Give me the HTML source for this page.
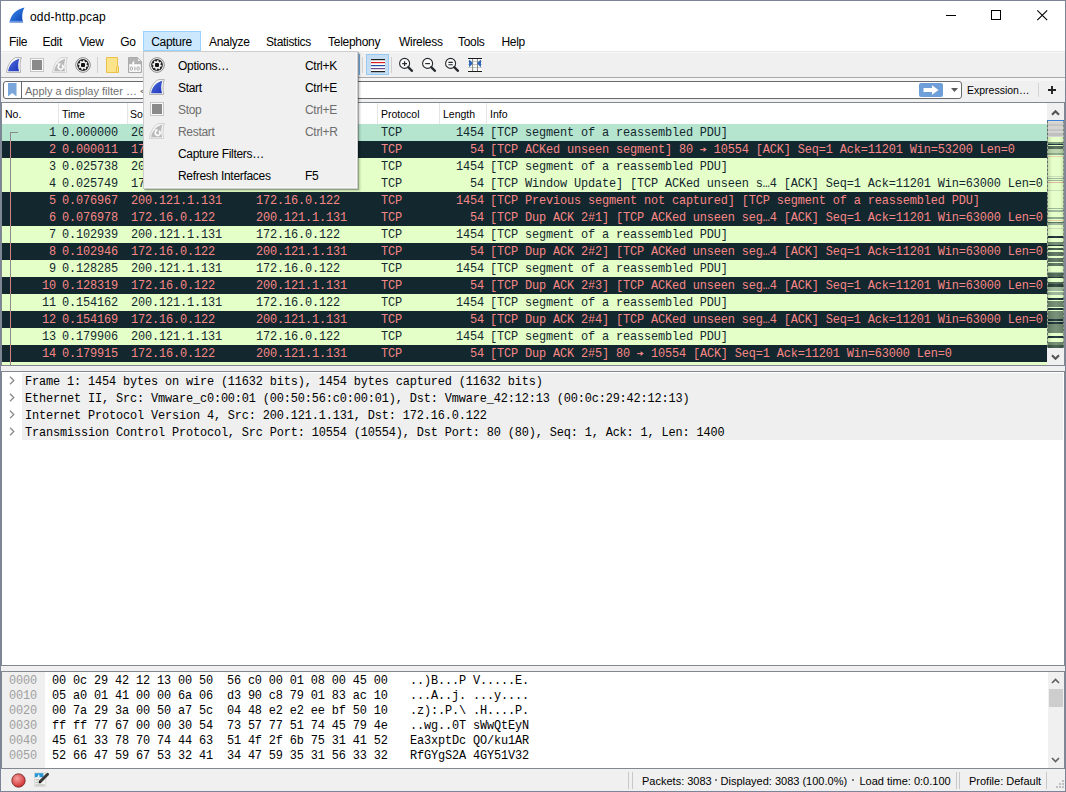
<!DOCTYPE html><html><head><meta charset="utf-8"><style>
*{margin:0;padding:0;box-sizing:border-box}
html,body{width:1066px;height:792px;overflow:hidden;background:#fff}
body{position:relative;font-family:"Liberation Sans",sans-serif;font-size:12px;color:#000}
.a{position:absolute}
.t{position:absolute;white-space:pre;line-height:1}
.ic{position:absolute;overflow:visible}
.mono{font-family:"Liberation Mono",monospace;font-size:11.9px;letter-spacing:-0.14px}
.row{position:absolute;left:2px;width:1045px;height:17px;overflow:hidden}
.row .c{position:absolute;top:1px;white-space:pre;font-family:"Liberation Mono",monospace;font-size:11.9px;letter-spacing:-0.14px;line-height:17px}
.ok{background:#e4ffc7;color:#12272e}
.bad{background:#12272e;color:#f78787}
.sel{background:#b5e5cf;color:#12272e}
.hdr{position:absolute;top:109px;font-size:10.5px;line-height:1;white-space:pre}
.vl{position:absolute;width:1px}
.hl{position:absolute;height:1px}
.mi{position:absolute;white-space:pre;font-size:12px;line-height:1}
.dis{color:#6d6d6d}
</style></head><body>
<svg width="0" height="0" style="position:absolute"><defs>
<linearGradient id="finb" x1="0" y1="0" x2="1" y2="1"><stop offset="0" stop-color="#4c6ee0"/><stop offset="1" stop-color="#1f36b8"/></linearGradient>
<linearGradient id="fint" x1="0" y1="0" x2="1" y2="1"><stop offset="0" stop-color="#3d8ef0"/><stop offset="1" stop-color="#0a3fb0"/></linearGradient>
</defs></svg>
<div class="a" style="left:0;top:0;width:1066px;height:792px;border:1px solid #7a8698;border-right-color:#7a8698"></div>
<svg class="ic" style="left:9px;top:7px" width="16" height="16" viewBox="0 0 16 16"><path d="M0.5 15.5 C2 8 6 2.5 15.5 0.5 C13 4.5 12.5 10 14 15.5 Z" fill="url(#fint)"/><rect x="0.5" y="13.8" width="13.5" height="1.7" fill="#7fa6e6" opacity="0.8"/></svg>
<div class="t" style="left:30px;top:10.5px;font-size:12px;letter-spacing:0.2px;color:#000">odd-http.pcap</div>
<div class="a" style="left:946px;top:15px;width:10px;height:1px;background:#000"></div>
<div class="a" style="left:991px;top:10px;width:10px;height:10px;border:1px solid #000"></div>
<svg class="ic" style="left:1037px;top:10px" width="11" height="11" viewBox="0 0 11 11"><path d="M0.3 0.3 L10.2 10.2 M10.2 0.3 L0.3 10.2" stroke="#000" stroke-width="1.1"/></svg>
<div class="a" style="left:143px;top:31px;width:58px;height:20px;background:#cce8ff;border:1px solid #99d1ff"></div>
<div class="mi" style="left:9.0px;top:36px;font-size:12px;letter-spacing:-0.3px">File</div>
<div class="mi" style="left:42.5px;top:36px;font-size:12px;letter-spacing:-0.3px">Edit</div>
<div class="mi" style="left:79.0px;top:36px;font-size:12px;letter-spacing:-0.3px">View</div>
<div class="mi" style="left:120.2px;top:36px;font-size:12px;letter-spacing:-0.3px">Go</div>
<div class="mi" style="left:151.2px;top:36px;font-size:12px;letter-spacing:-0.3px">Capture</div>
<div class="mi" style="left:209.0px;top:36px;font-size:12px;letter-spacing:-0.3px">Analyze</div>
<div class="mi" style="left:265.9px;top:36px;font-size:12px;letter-spacing:-0.3px">Statistics</div>
<div class="mi" style="left:328.1px;top:36px;font-size:12px;letter-spacing:-0.3px">Telephony</div>
<div class="mi" style="left:399.0px;top:36px;font-size:12px;letter-spacing:-0.3px">Wireless</div>
<div class="mi" style="left:458.0px;top:36px;font-size:12px;letter-spacing:-0.3px">Tools</div>
<div class="mi" style="left:501.5px;top:36px;font-size:12px;letter-spacing:-0.3px">Help</div>
<div class="a" style="left:1px;top:51px;width:1064px;height:1px;background:#e8e8e8"></div>
<div class="a" style="left:1px;top:52px;width:1064px;height:25px;background:#f0f0f0"></div>
<div class="a" style="left:1px;top:52px;width:1064px;height:1px;background:#f8f8f8"></div>
<div class="a" style="left:1px;top:77px;width:1064px;height:1px;background:#a8a8a8"></div>
<svg class="ic" style="left:6px;top:57px" width="16" height="16" viewBox="0 0 16 16"><path d="M0.5 15.4 C1.5 8.5 4.5 3 9.5 0.6 L15.3 0.6 C13.8 4.5 13.6 11 14.7 15.4 Z" fill="#fbfbfb" stroke="#a8a8a8" stroke-width="0.9"/><path d="M2.1 14.3 C3 8.2 7 3.2 13.4 1.7 C11.9 5.5 11.8 10.5 13.1 14.3 Z" fill="url(#finb)"/></svg>
<svg class="ic" style="left:29px;top:57px" width="16" height="16" viewBox="0 0 16 16"><rect x="1.5" y="1.5" width="13" height="13" fill="#fafafa" stroke="#c6c6c6" stroke-width="1"/><rect x="3" y="3" width="10" height="10" fill="#8a8a8a"/></svg>
<svg class="ic" style="left:52px;top:57px" width="16" height="16" viewBox="0 0 16 16"><path d="M0.5 15.4 C1.5 8.5 4.5 3 9.5 0.6 L15.3 0.6 C13.8 4.5 13.6 11 14.7 15.4 Z" fill="#f6f6f6" stroke="#cdcdcd" stroke-width="0.9"/><path d="M2.1 14.3 C3 8.2 7 3.2 13.4 1.7 C11.9 5.5 11.8 10.5 13.1 14.3 Z" fill="#b9b9b9"/><path d="M9.9 7.9 A2.4 2.4 0 1 1 6.6 8.8" fill="none" stroke="#fafafa" stroke-width="1.7"/><path d="M5.4 6.3 L9.3 6.5 L6.3 10.2 Z" fill="#fafafa"/></svg>
<svg class="ic" style="left:75px;top:57px" width="16" height="16" viewBox="0 0 16 16"><circle cx="8" cy="8" r="7.3" fill="#fafafa" stroke="#8a8a8a" stroke-width="1"/><circle cx="8" cy="8" r="5.9" fill="#262626"/><polygon points="12.88,8.48 12.69,9.42 11.17,9.70 10.78,10.28 11.11,11.79 10.31,12.32 9.05,11.44 8.35,11.58 7.52,12.88 6.58,12.69 6.30,11.17 5.72,10.78 4.21,11.11 3.68,10.31 4.56,9.05 4.42,8.35 3.12,7.52 3.31,6.58 4.83,6.30 5.22,5.72 4.89,4.21 5.69,3.68 6.95,4.56 7.65,4.42 8.48,3.12 9.42,3.31 9.70,4.83 10.28,5.22 11.79,4.89 12.32,5.69 11.44,6.95 11.58,7.65" fill="#f2f2f2"/><rect x="6" y="6" width="4" height="4" rx="1" fill="#111"/></svg>
<div class="a" style="left:97px;top:57px;width:1px;height:16px;background:#d0d0d0"></div>
<svg class="ic" style="left:105px;top:57px" width="16" height="16" viewBox="0 0 16 16"><path d="M1.5 0.5 H12.5 V9.5 H13.5 V15.5 H1.5 Z" fill="#fde48a" stroke="#e9c24a"/><path d="M11.5 9.5 V15.5" stroke="#e9c24a"/></svg>
<svg class="ic" style="left:128px;top:57px" width="14" height="16" viewBox="0 0 14 16"><path d="M0.5 0.5 H9.3 L13.5 4.7 V15.5 H0.5 Z" fill="#b3b3b3" stroke="#aaaaaa"/><rect x="1.2" y="7.2" width="11.6" height="7.7" fill="#fcfcfc"/><path d="M3.8 7.3 C4.4 5.4 5.2 4.2 6.2 3.8 V7.3 Z" fill="#fcfcfc"/><path d="M10 1.8 L12.2 4 H10 Z" fill="#fcfcfc"/><rect x="2.3" y="9.9" width="2.2" height="3.3" rx="0.9" fill="none" stroke="#a6a6a6" stroke-width="1"/><path d="M6.9 9.7 V13.4" stroke="#a6a6a6" stroke-width="1.1"/><rect x="9" y="9.9" width="2.2" height="3.3" rx="0.9" fill="none" stroke="#a6a6a6" stroke-width="1"/></svg>
<div class="a" style="left:356px;top:54px;width:4px;height:21px;background:#cce4f7;border-right:1px solid #6fa8dc"></div>
<div class="a" style="left:362px;top:57px;width:1px;height:16px;background:#d0d0d0"></div>
<div class="a" style="left:366px;top:54px;width:23px;height:21px;background:#c5ddf3;border:1px solid #99c9f2"></div>
<svg class="ic" style="left:371px;top:58px" width="14" height="15" viewBox="0 0 14 15"><rect x="0" y="1" width="14" height="13" fill="#fff"/><rect x="0" y="1" width="14" height="1.2" fill="#222"/><rect x="0" y="4" width="14" height="1.2" fill="#e02020"/><rect x="0" y="7" width="14" height="1.2" fill="#2050a0"/><rect x="0" y="10" width="14" height="1.2" fill="#6a4a88"/><rect x="0" y="13" width="14" height="1.2" fill="#222"/></svg>
<div class="a" style="left:391px;top:57px;width:1px;height:16px;background:#d0d0d0"></div>
<svg class="ic" style="left:398px;top:57px" width="16" height="16" viewBox="0 0 16 16"><circle cx="6.6" cy="6.4" r="5.0" fill="#fbfbfb" stroke="#262a2e" stroke-width="1.1"/><path d="M4.2 6.6 H9 M6.6 4.2 V9" stroke="#262a2e" stroke-width="1.2"/><path d="M10.2 10.2 L14 13.8" stroke="#262a2e" stroke-width="2.3" stroke-linecap="round"/></svg>
<svg class="ic" style="left:421px;top:57px" width="16" height="16" viewBox="0 0 16 16"><circle cx="6.6" cy="6.4" r="5.0" fill="#fbfbfb" stroke="#262a2e" stroke-width="1.1"/><path d="M4.2 6.6 H9" stroke="#262a2e" stroke-width="1.2"/><path d="M10.2 10.2 L14 13.8" stroke="#262a2e" stroke-width="2.3" stroke-linecap="round"/></svg>
<svg class="ic" style="left:444px;top:57px" width="16" height="16" viewBox="0 0 16 16"><circle cx="6.6" cy="6.4" r="5.0" fill="#fbfbfb" stroke="#262a2e" stroke-width="1.1"/><path d="M4.4 5.4 H8.8 M4.4 7.8 H8.8" stroke="#262a2e" stroke-width="1.1"/><path d="M10.2 10.2 L14 13.8" stroke="#262a2e" stroke-width="2.3" stroke-linecap="round"/></svg>
<svg class="ic" style="left:467px;top:57px" width="16" height="16" viewBox="0 0 16 16"><rect x="1" y="1.5" width="14" height="12.5" fill="#fafafa"/><path d="M1 4.5 H15 M1 7.5 H15 M1 10.5 H15" stroke="#b8bcb0" stroke-width="0.8"/><path d="M5.6 1.5 V14.5 M10.5 1.5 V14.5" stroke="#8a8a86" stroke-width="1"/><path d="M1 1.5 H15 M1 14.5 H15" stroke="#1a1a1a" stroke-width="1.2"/><path d="M2 3.2 Q2 2.6 2.8 2.9 L5.9 6.3 L2.8 9.7 Q2 10 2 9.4 Z M14 3.2 Q14 2.6 13.2 2.9 L10.1 6.3 L13.2 9.7 Q14 10 14 9.4 Z" fill="#2f66b8"/></svg>
<div class="a" style="left:1px;top:78px;width:1064px;height:24px;background:#f0f0f0"></div>
<div class="a" style="left:1px;top:78px;width:1064px;height:3px;background:#f6f6f6"></div>
<div class="a" style="left:3px;top:81px;width:959px;height:18px;background:#fff;border:1px solid #6a6a6a;border-radius:3px"></div>
<div class="a" style="left:21px;top:82px;width:1px;height:16px;background:#6a6a6a"></div>
<svg class="ic" style="left:8px;top:83px" width="9" height="14" viewBox="0 0 9 14"><path d="M0 0 H8.5 V13.5 L4.25 10 L0 13.5 Z" fill="#7aa6da"/></svg>
<div class="t" style="left:25px;top:85.7px;font-size:11px;color:#707070">Apply a display filter … &lt;Ctrl-/&gt;</div>
<div class="a" style="left:919px;top:83px;width:24px;height:14px;background:#6f9fd8;border-radius:2px"></div>
<svg class="ic" style="left:922px;top:84px" width="18" height="12" viewBox="0 0 18 12"><path d="M1.5 4 H10 V1.2 L16.5 6 L10 10.8 V8 H1.5 Z" fill="#fff"/></svg>
<svg class="ic" style="left:951px;top:88px" width="7" height="4" viewBox="0 0 7 4"><path d="M0 0 H7 L3.5 4 Z" fill="#5a5a5a"/></svg>
<div class="t" style="left:967px;top:84.5px;font-size:10.5px">Expression…</div>
<div class="a" style="left:1038px;top:83px;width:1px;height:14px;background:#d4d4d4"></div>
<svg class="ic" style="left:1048px;top:86px" width="8" height="8" viewBox="0 0 8 8"><path d="M4 0 V8 M0 4 H8" stroke="#222" stroke-width="1.9"/></svg>
<div class="a" style="left:1px;top:102px;width:1064px;height:264px;background:#fff;border:1px solid #828790"></div>
<div class="hdr" style="left:5px">No.</div>
<div class="hdr" style="left:62px">Time</div>
<div class="hdr" style="left:130px">So</div>
<div class="hdr" style="left:381px">Protocol</div>
<div class="hdr" style="left:443px">Length</div>
<div class="hdr" style="left:490px">Info</div>
<div class="vl" style="left:58px;top:103px;height:21px;background:#e5e5e5"></div>
<div class="vl" style="left:127px;top:103px;height:21px;background:#e5e5e5"></div>
<div class="vl" style="left:377px;top:103px;height:21px;background:#e5e5e5"></div>
<div class="vl" style="left:439px;top:103px;height:21px;background:#e5e5e5"></div>
<div class="vl" style="left:486px;top:103px;height:21px;background:#e5e5e5"></div>
<div class="row sel" style="top:124px"><span class="c" style="left:0;width:54px;text-align:right">1</span><span class="c" style="left:60px">0.000000</span><span class="c" style="left:129px">200.121.1.131</span><span class="c" style="left:254px">172.16.0.122</span><span class="c" style="left:379px">TCP</span><span class="c" style="left:0;width:482px;text-align:right">1454</span><span class="c" style="left:488px">[TCP segment of a reassembled PDU]</span></div>
<div class="row bad" style="top:141px"><span class="c" style="left:0;width:54px;text-align:right">2</span><span class="c" style="left:60px">0.000011</span><span class="c" style="left:129px">172.16.0.122</span><span class="c" style="left:254px">200.121.1.131</span><span class="c" style="left:379px">TCP</span><span class="c" style="left:0;width:482px;text-align:right">54</span><span class="c" style="left:488px">[TCP ACKed unseen segment] 80 <svg width="7" height="17" viewBox="0 0 7 17" style="vertical-align:top"><path d="M0.2 7.6 H5" stroke="currentColor" stroke-width="1.1"/><path d="M3.6 5.2 L6.8 7.6 L3.6 10 Z" fill="currentColor"/></svg> 10554 [ACK] Seq=1 Ack=11201 Win=53200 Len=0</span></div>
<div class="row ok" style="top:158px"><span class="c" style="left:0;width:54px;text-align:right">3</span><span class="c" style="left:60px">0.025738</span><span class="c" style="left:129px">200.121.1.131</span><span class="c" style="left:254px">172.16.0.122</span><span class="c" style="left:379px">TCP</span><span class="c" style="left:0;width:482px;text-align:right">1454</span><span class="c" style="left:488px">[TCP segment of a reassembled PDU]</span></div>
<div class="row ok" style="top:175px"><span class="c" style="left:0;width:54px;text-align:right">4</span><span class="c" style="left:60px">0.025749</span><span class="c" style="left:129px">172.16.0.122</span><span class="c" style="left:254px">200.121.1.131</span><span class="c" style="left:379px">TCP</span><span class="c" style="left:0;width:482px;text-align:right">54</span><span class="c" style="left:488px">[TCP Window Update] [TCP ACKed unseen s…4 [ACK] Seq=1 Ack=11201 Win=63000 Len=0</span></div>
<div class="row bad" style="top:192px"><span class="c" style="left:0;width:54px;text-align:right">5</span><span class="c" style="left:60px">0.076967</span><span class="c" style="left:129px">200.121.1.131</span><span class="c" style="left:254px">172.16.0.122</span><span class="c" style="left:379px">TCP</span><span class="c" style="left:0;width:482px;text-align:right">1454</span><span class="c" style="left:488px">[TCP Previous segment not captured] [TCP segment of a reassembled PDU]</span></div>
<div class="row bad" style="top:209px"><span class="c" style="left:0;width:54px;text-align:right">6</span><span class="c" style="left:60px">0.076978</span><span class="c" style="left:129px">172.16.0.122</span><span class="c" style="left:254px">200.121.1.131</span><span class="c" style="left:379px">TCP</span><span class="c" style="left:0;width:482px;text-align:right">54</span><span class="c" style="left:488px">[TCP Dup ACK 2#1] [TCP ACKed unseen seg…4 [ACK] Seq=1 Ack=11201 Win=63000 Len=0</span></div>
<div class="row ok" style="top:226px"><span class="c" style="left:0;width:54px;text-align:right">7</span><span class="c" style="left:60px">0.102939</span><span class="c" style="left:129px">200.121.1.131</span><span class="c" style="left:254px">172.16.0.122</span><span class="c" style="left:379px">TCP</span><span class="c" style="left:0;width:482px;text-align:right">1454</span><span class="c" style="left:488px">[TCP segment of a reassembled PDU]</span></div>
<div class="row bad" style="top:243px"><span class="c" style="left:0;width:54px;text-align:right">8</span><span class="c" style="left:60px">0.102946</span><span class="c" style="left:129px">172.16.0.122</span><span class="c" style="left:254px">200.121.1.131</span><span class="c" style="left:379px">TCP</span><span class="c" style="left:0;width:482px;text-align:right">54</span><span class="c" style="left:488px">[TCP Dup ACK 2#2] [TCP ACKed unseen seg…4 [ACK] Seq=1 Ack=11201 Win=63000 Len=0</span></div>
<div class="row ok" style="top:260px"><span class="c" style="left:0;width:54px;text-align:right">9</span><span class="c" style="left:60px">0.128285</span><span class="c" style="left:129px">200.121.1.131</span><span class="c" style="left:254px">172.16.0.122</span><span class="c" style="left:379px">TCP</span><span class="c" style="left:0;width:482px;text-align:right">1454</span><span class="c" style="left:488px">[TCP segment of a reassembled PDU]</span></div>
<div class="row bad" style="top:277px"><span class="c" style="left:0;width:54px;text-align:right">10</span><span class="c" style="left:60px">0.128319</span><span class="c" style="left:129px">172.16.0.122</span><span class="c" style="left:254px">200.121.1.131</span><span class="c" style="left:379px">TCP</span><span class="c" style="left:0;width:482px;text-align:right">54</span><span class="c" style="left:488px">[TCP Dup ACK 2#3] [TCP ACKed unseen seg…4 [ACK] Seq=1 Ack=11201 Win=63000 Len=0</span></div>
<div class="row ok" style="top:294px"><span class="c" style="left:0;width:54px;text-align:right">11</span><span class="c" style="left:60px">0.154162</span><span class="c" style="left:129px">200.121.1.131</span><span class="c" style="left:254px">172.16.0.122</span><span class="c" style="left:379px">TCP</span><span class="c" style="left:0;width:482px;text-align:right">1454</span><span class="c" style="left:488px">[TCP segment of a reassembled PDU]</span></div>
<div class="row bad" style="top:311px"><span class="c" style="left:0;width:54px;text-align:right">12</span><span class="c" style="left:60px">0.154169</span><span class="c" style="left:129px">172.16.0.122</span><span class="c" style="left:254px">200.121.1.131</span><span class="c" style="left:379px">TCP</span><span class="c" style="left:0;width:482px;text-align:right">54</span><span class="c" style="left:488px">[TCP Dup ACK 2#4] [TCP ACKed unseen seg…4 [ACK] Seq=1 Ack=11201 Win=63000 Len=0</span></div>
<div class="row ok" style="top:328px"><span class="c" style="left:0;width:54px;text-align:right">13</span><span class="c" style="left:60px">0.179906</span><span class="c" style="left:129px">200.121.1.131</span><span class="c" style="left:254px">172.16.0.122</span><span class="c" style="left:379px">TCP</span><span class="c" style="left:0;width:482px;text-align:right">1454</span><span class="c" style="left:488px">[TCP segment of a reassembled PDU]</span></div>
<div class="row bad" style="top:345px"><span class="c" style="left:0;width:54px;text-align:right">14</span><span class="c" style="left:60px">0.179915</span><span class="c" style="left:129px">172.16.0.122</span><span class="c" style="left:254px">200.121.1.131</span><span class="c" style="left:379px">TCP</span><span class="c" style="left:0;width:482px;text-align:right">54</span><span class="c" style="left:488px">[TCP Dup ACK 2#5] 80 <svg width="7" height="17" viewBox="0 0 7 17" style="vertical-align:top"><path d="M0.2 7.6 H5" stroke="currentColor" stroke-width="1.1"/><path d="M3.6 5.2 L6.8 7.6 L3.6 10 Z" fill="currentColor"/></svg> 10554 [ACK] Seq=1 Ack=11201 Win=63000 Len=0</span></div>
<div class="row ok" style="top:362px;height:3px"></div>
<div class="a" style="left:10px;top:132px;width:1px;height:9px;background:#8a8a8a"></div>
<div class="a" style="left:10px;top:141px;width:1px;height:17px;background:#d98080"></div>
<div class="a" style="left:10px;top:158px;width:1px;height:17px;background:#8a8a8a"></div>
<div class="a" style="left:10px;top:175px;width:1px;height:17px;background:#8a8a8a"></div>
<div class="a" style="left:10px;top:192px;width:1px;height:17px;background:#d98080"></div>
<div class="a" style="left:10px;top:209px;width:1px;height:17px;background:#d98080"></div>
<div class="a" style="left:10px;top:226px;width:1px;height:17px;background:#8a8a8a"></div>
<div class="a" style="left:10px;top:243px;width:1px;height:17px;background:#d98080"></div>
<div class="a" style="left:10px;top:260px;width:1px;height:17px;background:#8a8a8a"></div>
<div class="a" style="left:10px;top:277px;width:1px;height:17px;background:#d98080"></div>
<div class="a" style="left:10px;top:294px;width:1px;height:17px;background:#8a8a8a"></div>
<div class="a" style="left:10px;top:311px;width:1px;height:17px;background:#d98080"></div>
<div class="a" style="left:10px;top:328px;width:1px;height:17px;background:#8a8a8a"></div>
<div class="a" style="left:10px;top:345px;width:1px;height:17px;background:#d98080"></div>
<div class="a" style="left:10px;top:362px;width:1px;height:3px;background:#8a8a8a"></div>
<div class="a" style="left:10px;top:132px;width:8px;height:1px;background:#8a8a8a"></div>
<div class="a" style="left:1047px;top:103px;width:17px;height:262px;background:#e4ffc7;border-left:1px solid #cfcfcf"></div>
<div class="a" style="left:1047px;top:103px;width:17px;height:17px;background:#f0f0f0"></div>
<svg class="ic" style="left:1051px;top:108.5px" width="9" height="7" viewBox="0 0 9 7"><path d="M1 5.8 L4.5 2.2 L8 5.8" fill="none" stroke="#555" stroke-width="2.1"/></svg>
<div class="a" style="left:1047px;top:120px;width:17px;height:1px;background:#3c7fd6"></div>
<div class="a" style="left:1048px;top:121px;width:16px;height:16px;background:#d4d4d2"></div>
<div class="a" style="left:1048px;top:121px;width:16px;height:1px;background:#e0dcd4"></div>
<div class="a" style="left:1048px;top:124px;width:16px;height:2px;background:#c4c4c2"></div>
<div class="a" style="left:1048px;top:129px;width:16px;height:2px;background:#c4c4c2"></div>
<div class="a" style="left:1048px;top:133px;width:16px;height:3px;background:#c0c0be"></div>
<div class="a" style="left:1048px;top:137px;width:16px;height:211px;background:#e4ffc7"></div>
<div class="a" style="left:1048px;top:141.50px;width:16px;height:2.00px;background:#7a9a7a"></div>
<div class="a" style="left:1048px;top:143.50px;width:16px;height:1.25px;background:#1c3236"></div>
<div class="a" style="left:1048px;top:146.00px;width:16px;height:2.50px;background:#4f6855"></div>
<div class="a" style="left:1048px;top:148.50px;width:16px;height:4.20px;background:#b8d0a8"></div>
<div class="a" style="left:1048px;top:152.70px;width:16px;height:2.30px;background:#8aa888"></div>
<div class="a" style="left:1048px;top:155.50px;width:16px;height:1.00px;background:#e8cfa8"></div>
<div class="a" style="left:1048px;top:176.00px;width:16px;height:1.00px;background:#c8dcb8"></div>
<div class="a" style="left:1048px;top:177.50px;width:16px;height:1.00px;background:#9ab598"></div>
<div class="a" style="left:1048px;top:180.00px;width:16px;height:1.00px;background:#9ab598"></div>
<div class="a" style="left:1048px;top:182.00px;width:16px;height:1.00px;background:#e0b898"></div>
<div class="a" style="left:1048px;top:189.50px;width:16px;height:1.00px;background:#c8dcb8"></div>
<div class="a" style="left:1048px;top:208.00px;width:16px;height:1.00px;background:#9ab598"></div>
<div class="a" style="left:1048px;top:210.40px;width:16px;height:1.30px;background:#9ab598"></div>
<div class="a" style="left:1048px;top:217.00px;width:16px;height:2.20px;background:#8aa888"></div>
<div class="a" style="left:1048px;top:219.50px;width:16px;height:1.00px;background:#e8cfa8"></div>
<div class="a" style="left:1048px;top:222.00px;width:16px;height:1.00px;background:#5a7060"></div>
<div class="a" style="left:1048px;top:223.00px;width:16px;height:2.00px;background:#9ab598"></div>
<div class="a" style="left:1048px;top:228.00px;width:16px;height:1.00px;background:#c8dcb8"></div>
<div class="a" style="left:1048px;top:236.25px;width:16px;height:1.75px;background:#1c3236"></div>
<div class="a" style="left:1048px;top:241.70px;width:16px;height:3.30px;background:#708a70"></div>
<div class="a" style="left:1048px;top:245.00px;width:16px;height:0.80px;background:#1c3236"></div>
<div class="a" style="left:1048px;top:247.50px;width:16px;height:2.50px;background:#405848"></div>
<div class="a" style="left:1048px;top:251.70px;width:16px;height:4.10px;background:#5a7260"></div>
<div class="a" style="left:1048px;top:258.30px;width:16px;height:3.40px;background:#5a7260"></div>
<div class="a" style="left:1048px;top:263.30px;width:16px;height:3.20px;background:#5a7260"></div>
<div class="a" style="left:1048px;top:271.50px;width:16px;height:0.80px;background:#9ab598"></div>
<div class="a" style="left:1048px;top:273.00px;width:16px;height:3.50px;background:#4f6855"></div>
<div class="a" style="left:1048px;top:276.50px;width:16px;height:1.25px;background:#1c3236"></div>
<div class="a" style="left:1048px;top:282.00px;width:16px;height:1.60px;background:#4f6855"></div>
<div class="a" style="left:1048px;top:283.60px;width:16px;height:3.40px;background:#2a4038"></div>
<div class="a" style="left:1048px;top:287.00px;width:16px;height:3.70px;background:#9ab598"></div>
<div class="a" style="left:1048px;top:292.30px;width:16px;height:2.50px;background:#9ab598"></div>
<div class="a" style="left:1048px;top:298.20px;width:16px;height:1.60px;background:#1c3236"></div>
<div class="a" style="left:1048px;top:301.25px;width:16px;height:5.75px;background:#6f886f"></div>
<div class="a" style="left:1048px;top:308.30px;width:16px;height:1.70px;background:#1c3236"></div>
<div class="a" style="left:1048px;top:311.25px;width:16px;height:7.50px;background:#6f886f"></div>
<div class="a" style="left:1048px;top:318.75px;width:16px;height:2.05px;background:#1c3236"></div>
<div class="a" style="left:1048px;top:320.80px;width:16px;height:1.20px;background:#9ab598"></div>
<div class="a" style="left:1048px;top:322.00px;width:16px;height:1.75px;background:#1c3236"></div>
<div class="a" style="left:1048px;top:323.75px;width:16px;height:8.75px;background:#6f886f"></div>
<div class="a" style="left:1048px;top:335.80px;width:16px;height:2.10px;background:#1c3236"></div>
<div class="a" style="left:1048px;top:341.70px;width:16px;height:3.30px;background:#6f886f"></div>
<div class="a" style="left:1048px;top:345.00px;width:16px;height:3.00px;background:#405848"></div>
<div class="a" style="left:1048px;top:137px;width:16px;height:211px;background:linear-gradient(90deg,rgba(0,0,0,0.12),rgba(0,0,0,0) 25%,rgba(255,255,255,0.08) 50%,rgba(0,0,0,0) 75%,rgba(0,0,0,0.12))"></div>
<div class="a" style="left:1047px;top:121px;width:1px;height:227px;background:repeating-linear-gradient(180deg,#5f6f5f 0 2px,#9aa89a 2px 4px)"></div>
<div class="a" style="left:1063px;top:121px;width:1px;height:227px;background:repeating-linear-gradient(180deg,#5f6f5f 0 2px,#9aa89a 2px 4px);opacity:0.7"></div>
<div class="a" style="left:1047px;top:348px;width:17px;height:17px;background:#f0f0f0"></div>
<svg class="ic" style="left:1051px;top:353.5px" width="9" height="7" viewBox="0 0 9 7"><path d="M1 1.2 L4.5 4.8 L8 1.2" fill="none" stroke="#555" stroke-width="2.1"/></svg>
<div class="a" style="left:1px;top:366px;width:1064px;height:5px;background:#f0f0f0"></div>
<div class="a" style="left:1px;top:371px;width:1064px;height:295px;background:#fff;border:1px solid #828790"></div>
<div class="a" style="left:22px;top:373px;width:1041px;height:67px;background:#efefef"></div>
<svg class="ic" style="left:9px;top:376px" width="6" height="9" viewBox="0 0 6 9"><path d="M1 0.8 L4.8 4.5 L1 8.2" fill="none" stroke="#8a8a8a" stroke-width="1.3"/></svg>
<div class="t mono" style="left:25px;top:374px;line-height:17px;color:#000">Frame 1: 1454 bytes on wire (11632 bits), 1454 bytes captured (11632 bits)</div>
<svg class="ic" style="left:9px;top:393px" width="6" height="9" viewBox="0 0 6 9"><path d="M1 0.8 L4.8 4.5 L1 8.2" fill="none" stroke="#8a8a8a" stroke-width="1.3"/></svg>
<div class="t mono" style="left:25px;top:391px;line-height:17px;color:#000">Ethernet II, Src: Vmware_c0:00:01 (00:50:56:c0:00:01), Dst: Vmware_42:12:13 (00:0c:29:42:12:13)</div>
<svg class="ic" style="left:9px;top:410px" width="6" height="9" viewBox="0 0 6 9"><path d="M1 0.8 L4.8 4.5 L1 8.2" fill="none" stroke="#8a8a8a" stroke-width="1.3"/></svg>
<div class="t mono" style="left:25px;top:408px;line-height:17px;color:#000">Internet Protocol Version 4, Src: 200.121.1.131, Dst: 172.16.0.122</div>
<svg class="ic" style="left:9px;top:427px" width="6" height="9" viewBox="0 0 6 9"><path d="M1 0.8 L4.8 4.5 L1 8.2" fill="none" stroke="#8a8a8a" stroke-width="1.3"/></svg>
<div class="t mono" style="left:25px;top:425px;line-height:17px;color:#000">Transmission Control Protocol, Src Port: 10554 (10554), Dst Port: 80 (80), Seq: 1, Ack: 1, Len: 1400</div>
<div class="a" style="left:1px;top:666px;width:1064px;height:5px;background:#f0f0f0"></div>
<div class="a" style="left:1px;top:671px;width:1064px;height:98px;background:#fff;border:1px solid #828790"></div>
<div class="a" style="left:2px;top:672px;width:43px;height:96px;background:#efefef"></div>
<div class="t mono" style="left:9px;top:674px;line-height:15px;color:#a0a0a0">0000</div>
<div class="t mono" style="left:52px;top:674px;line-height:15px;color:#000">00 0c 29 42 12 13 00 50  56 c0 00 01 08 00 45 00</div>
<div class="t mono" style="left:410px;top:674px;line-height:15px;color:#000">..)B...P V.....E.</div>
<div class="t mono" style="left:9px;top:689px;line-height:15px;color:#a0a0a0">0010</div>
<div class="t mono" style="left:52px;top:689px;line-height:15px;color:#000">05 a0 01 41 00 00 6a 06  d3 90 c8 79 01 83 ac 10</div>
<div class="t mono" style="left:410px;top:689px;line-height:15px;color:#000">...A..j. ...y....</div>
<div class="t mono" style="left:9px;top:704px;line-height:15px;color:#a0a0a0">0020</div>
<div class="t mono" style="left:52px;top:704px;line-height:15px;color:#000">00 7a 29 3a 00 50 a7 5c  04 48 e2 e2 ee bf 50 10</div>
<div class="t mono" style="left:410px;top:704px;line-height:15px;color:#000">.z):.P.\ .H....P.</div>
<div class="t mono" style="left:9px;top:719px;line-height:15px;color:#a0a0a0">0030</div>
<div class="t mono" style="left:52px;top:719px;line-height:15px;color:#000">ff ff 77 67 00 00 30 54  73 57 77 51 74 45 79 4e</div>
<div class="t mono" style="left:410px;top:719px;line-height:15px;color:#000">..wg..0T sWwQtEyN</div>
<div class="t mono" style="left:9px;top:734px;line-height:15px;color:#a0a0a0">0040</div>
<div class="t mono" style="left:52px;top:734px;line-height:15px;color:#000">45 61 33 78 70 74 44 63  51 4f 2f 6b 75 31 41 52</div>
<div class="t mono" style="left:410px;top:734px;line-height:15px;color:#000">Ea3xptDc QO/ku1AR</div>
<div class="t mono" style="left:9px;top:749px;line-height:15px;color:#a0a0a0">0050</div>
<div class="t mono" style="left:52px;top:749px;line-height:15px;color:#000">52 66 47 59 67 53 32 41  34 47 59 35 31 56 33 32</div>
<div class="t mono" style="left:410px;top:749px;line-height:15px;color:#000">RfGYgS2A 4GY51V32</div>
<div class="a" style="left:1048px;top:672px;width:16px;height:96px;background:#f0f0f0"></div>
<svg class="ic" style="left:1051px;top:678px" width="9" height="6" viewBox="0 0 9 6"><path d="M1 5 L4.5 1.5 L8 5" fill="none" stroke="#606060" stroke-width="1.6"/></svg>
<div class="a" style="left:1049px;top:689px;width:14px;height:18px;background:#cdcdcd"></div>
<svg class="ic" style="left:1051px;top:757px" width="9" height="6" viewBox="0 0 9 6"><path d="M1 1 L4.5 4.5 L8 1" fill="none" stroke="#606060" stroke-width="1.6"/></svg>
<div class="a" style="left:1px;top:769px;width:1064px;height:22px;background:#f0f0f0"></div>
<svg class="ic" style="left:10.5px;top:772.5px" width="15" height="15" viewBox="0 0 15 15"><defs><radialGradient id="rb" cx="0.4" cy="0.35" r="0.7"><stop offset="0" stop-color="#f4a0a0"/><stop offset="1" stop-color="#d02828"/></radialGradient></defs><circle cx="7.5" cy="7.5" r="6.7" fill="url(#rb)" stroke="#6a2525" stroke-width="0.8"/></svg>
<svg class="ic" style="left:33px;top:771px" width="16" height="16" viewBox="0 0 16 16"><rect x="1.4" y="1.9" width="11.4" height="13.6" fill="#f3f3ef" stroke="#d4d4d0" stroke-width="0.8"/><rect x="1.8" y="2.2" width="8.6" height="4" fill="#2a96d6"/><path d="M4.2 6.2 L6 3 L6.6 6.2 Z" fill="#fff"/><path d="M2.6 8.8 H6 M2.6 11.4 H5 M2.6 14 H11.5" stroke="#9a9a9a" stroke-width="0.8"/><path d="M7.2 10.6 L14.6 3.2" stroke="#3a3a3a" stroke-width="2.9" stroke-linecap="round"/><path d="M5.6 12.6 L6.2 10 L8 11.6 Z" fill="#111"/></svg>
<div class="a" style="left:628px;top:772px;width:1px;height:17px;background:#c8c8c8"></div>
<div class="a" style="left:632px;top:772px;width:1px;height:17px;background:#c8c8c8"></div>
<div class="a" style="left:956px;top:772px;width:1px;height:17px;background:#c8c8c8"></div>
<div class="a" style="left:959px;top:772px;width:1px;height:17px;background:#c8c8c8"></div>
<div class="a" style="left:1046px;top:772px;width:1px;height:17px;background:#c8c8c8"></div>
<div class="t" style="left:642px;top:776.4px;font-size:11px">Packets: 3083</div>
<div class="t" style="left:720.5px;top:776.4px;font-size:11px">Displayed: 3083 (100.0%)</div>
<div class="t" style="left:859.5px;top:776.4px;font-size:11px">Load time: 0:0.100</div>
<div class="t" style="left:969px;top:776.4px;font-size:11px">Profile: Default</div>
<div class="a" style="left:715px;top:779px;width:2px;height:2px;background:#555;border-radius:1px"></div>
<div class="a" style="left:852px;top:779px;width:2px;height:2px;background:#555;border-radius:1px"></div>
<div class="a" style="left:1062px;top:780px;width:2px;height:2px;background:#c0c0c0"></div>
<div class="a" style="left:1059px;top:783px;width:2px;height:2px;background:#c0c0c0"></div>
<div class="a" style="left:1062px;top:783px;width:2px;height:2px;background:#c0c0c0"></div>
<div class="a" style="left:1056px;top:786px;width:2px;height:2px;background:#c0c0c0"></div>
<div class="a" style="left:1059px;top:786px;width:2px;height:2px;background:#c0c0c0"></div>
<div class="a" style="left:1062px;top:786px;width:2px;height:2px;background:#c0c0c0"></div>
<div class="a" style="left:143px;top:51px;width:215px;height:138px;background:#f0f0f0;border:1px solid #cccccc;box-shadow:inset -1px -1px 0 #f9f9f9,1px 1px 0 rgba(0,0,0,0.22),2px 2px 2px rgba(0,0,0,0.2)"></div>
<svg class="ic" style="left:149px;top:57px" width="16" height="16" viewBox="0 0 16 16"><circle cx="8" cy="8" r="7.3" fill="#fafafa" stroke="#8a8a8a" stroke-width="1"/><circle cx="8" cy="8" r="5.9" fill="#262626"/><polygon points="12.88,8.48 12.69,9.42 11.17,9.70 10.78,10.28 11.11,11.79 10.31,12.32 9.05,11.44 8.35,11.58 7.52,12.88 6.58,12.69 6.30,11.17 5.72,10.78 4.21,11.11 3.68,10.31 4.56,9.05 4.42,8.35 3.12,7.52 3.31,6.58 4.83,6.30 5.22,5.72 4.89,4.21 5.69,3.68 6.95,4.56 7.65,4.42 8.48,3.12 9.42,3.31 9.70,4.83 10.28,5.22 11.79,4.89 12.32,5.69 11.44,6.95 11.58,7.65" fill="#f2f2f2"/><rect x="6" y="6" width="4" height="4" rx="1" fill="#111"/></svg>
<div class="mi" style="left:178px;top:59.64px;font-size:12px;letter-spacing:-0.3px">Options…</div>
<div class="mi" style="left:305px;top:59.64px;font-size:12px;letter-spacing:-0.3px">Ctrl+K</div>
<svg class="ic" style="left:149px;top:79px" width="16" height="16" viewBox="0 0 16 16"><path d="M0.5 15.4 C1.5 8.5 4.5 3 9.5 0.6 L15.3 0.6 C13.8 4.5 13.6 11 14.7 15.4 Z" fill="#fbfbfb" stroke="#a8a8a8" stroke-width="0.9"/><path d="M2.1 14.3 C3 8.2 7 3.2 13.4 1.7 C11.9 5.5 11.8 10.5 13.1 14.3 Z" fill="url(#finb)"/></svg>
<div class="mi" style="left:178px;top:82.04px;font-size:12px;letter-spacing:-0.3px">Start</div>
<div class="mi" style="left:305px;top:82.04px;font-size:12px;letter-spacing:-0.3px">Ctrl+E</div>
<svg class="ic" style="left:149px;top:101px" width="16" height="16" viewBox="0 0 16 16"><rect x="1.5" y="1.5" width="13" height="13" fill="#fafafa" stroke="#c6c6c6" stroke-width="1"/><rect x="3" y="3" width="10" height="10" fill="#8a8a8a"/></svg>
<div class="mi dis" style="left:178px;top:104.34px;font-size:12px;letter-spacing:-0.3px">Stop</div>
<div class="mi dis" style="left:305px;top:104.34px;font-size:12px;letter-spacing:-0.3px">Ctrl+E</div>
<svg class="ic" style="left:149px;top:123px" width="16" height="16" viewBox="0 0 16 16"><path d="M0.5 15.4 C1.5 8.5 4.5 3 9.5 0.6 L15.3 0.6 C13.8 4.5 13.6 11 14.7 15.4 Z" fill="#f6f6f6" stroke="#cdcdcd" stroke-width="0.9"/><path d="M2.1 14.3 C3 8.2 7 3.2 13.4 1.7 C11.9 5.5 11.8 10.5 13.1 14.3 Z" fill="#b9b9b9"/><path d="M9.9 7.9 A2.4 2.4 0 1 1 6.6 8.8" fill="none" stroke="#fafafa" stroke-width="1.7"/><path d="M5.4 6.3 L9.3 6.5 L6.3 10.2 Z" fill="#fafafa"/></svg>
<div class="mi dis" style="left:178px;top:125.59px;font-size:12px;letter-spacing:-0.3px">Restart</div>
<div class="mi dis" style="left:305px;top:125.59px;font-size:12px;letter-spacing:-0.3px">Ctrl+R</div>
<div class="mi" style="left:178px;top:148.09px;font-size:12px;letter-spacing:-0.3px">Capture Filters…</div>
<div class="mi" style="left:178px;top:169.94px;font-size:12px;letter-spacing:-0.3px">Refresh Interfaces</div>
<div class="mi" style="left:305px;top:169.94px;font-size:12px;letter-spacing:-0.3px">F5</div>
</body></html>
